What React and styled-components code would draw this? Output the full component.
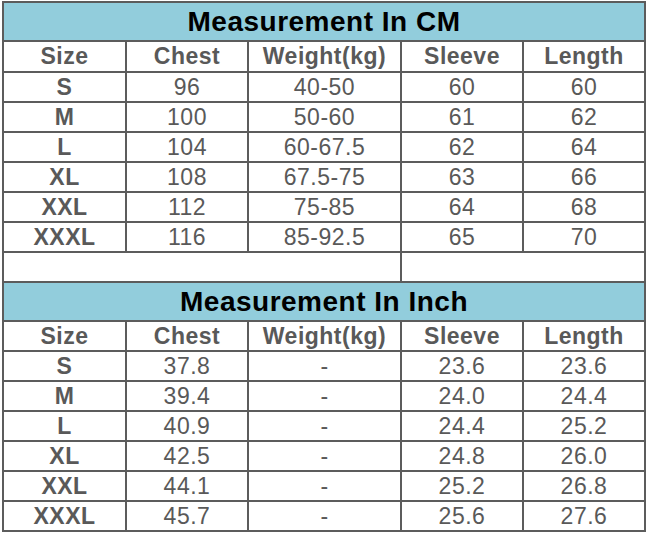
import React from "react";
import styled, { createGlobalStyle } from "styled-components";

const Global = createGlobalStyle`
  html, body { margin: 0; padding: 0; background: #ffffff; }
  body { font-family: "Liberation Sans", Arial, sans-serif; }
`;

const Page = styled.div`
  width: 647px;
  height: 535px;
  overflow: hidden;
  padding: 1px 0 0 2px;
  box-sizing: border-box;
`;

const Table = styled.table`
  border-collapse: collapse;
  table-layout: fixed;
  width: 642px;
  font-family: "Liberation Sans", Arial, sans-serif;
`;

const Col = styled.col`
  width: ${(p) => p.$w}px;
`;

const TitleCell = styled.td`
  height: 37px;
  padding: 0;
  border: 2px solid #5c5c5c;
  background: #92cddc;
  color: #000000;
  font-weight: bold;
  font-size: 28px;
  letter-spacing: 0.5px;
  text-align: center;
  vertical-align: middle;
  line-height: 1;
`;

const Cell = styled.td`
  height: ${(p) => p.$h || 28}px;
  padding: 0;
  border: 2px solid #5c5c5c;
  color: #595959;
  font-size: 23px;
  letter-spacing: 0.5px;
  font-weight: ${(p) => (p.$bold ? "bold" : "normal")};
  text-align: center;
  vertical-align: middle;
  line-height: 1;
  white-space: nowrap;
`;

const headers = ["Size", "Chest", "Weight(kg)", "Sleeve", "Length"];
const colWidths = [123, 122, 153, 122, 122];

const cmRows = [
  ["S", "96", "40-50", "60", "60"],
  ["M", "100", "50-60", "61", "62"],
  ["L", "104", "60-67.5", "62", "64"],
  ["XL", "108", "67.5-75", "63", "66"],
  ["XXL", "112", "75-85", "64", "68"],
  ["XXXL", "116", "85-92.5", "65", "70"],
];

const inchRows = [
  ["S", "37.8", "-", "23.6", "23.6"],
  ["M", "39.4", "-", "24.0", "24.4"],
  ["L", "40.9", "-", "24.4", "25.2"],
  ["XL", "42.5", "-", "24.8", "26.0"],
  ["XXL", "44.1", "-", "25.2", "26.8"],
  ["XXXL", "45.7", "-", "25.6", "27.6"],
];

function Section({ title, rows, headerH }) {
  return (
    <>
      <tr>
        <TitleCell colSpan={5}>{title}</TitleCell>
      </tr>
      <tr>
        {headers.map((h) => (
          <Cell key={h} $bold $h={headerH}>{h}</Cell>
        ))}
      </tr>
      {rows.map((r) => (
        <tr key={r[0]}>
          {r.map((v, i) => (
            <Cell key={i} $bold={i === 0}>{v}</Cell>
          ))}
        </tr>
      ))}
    </>
  );
}

export default function App() {
  return (
    <Page>
      <Global />
      <Table>
        <colgroup>
          {colWidths.map((w, i) => (
            <Col key={i} $w={w} />
          ))}
        </colgroup>
        <tbody>
          <Section title="Measurement In CM" rows={cmRows} headerH={29} />
          <tr>
            <Cell colSpan={3} />
            <Cell colSpan={2} />
          </tr>
          <Section title="Measurement In Inch" rows={inchRows} headerH={28} />
        </tbody>
      </Table>
    </Page>
  );
}
